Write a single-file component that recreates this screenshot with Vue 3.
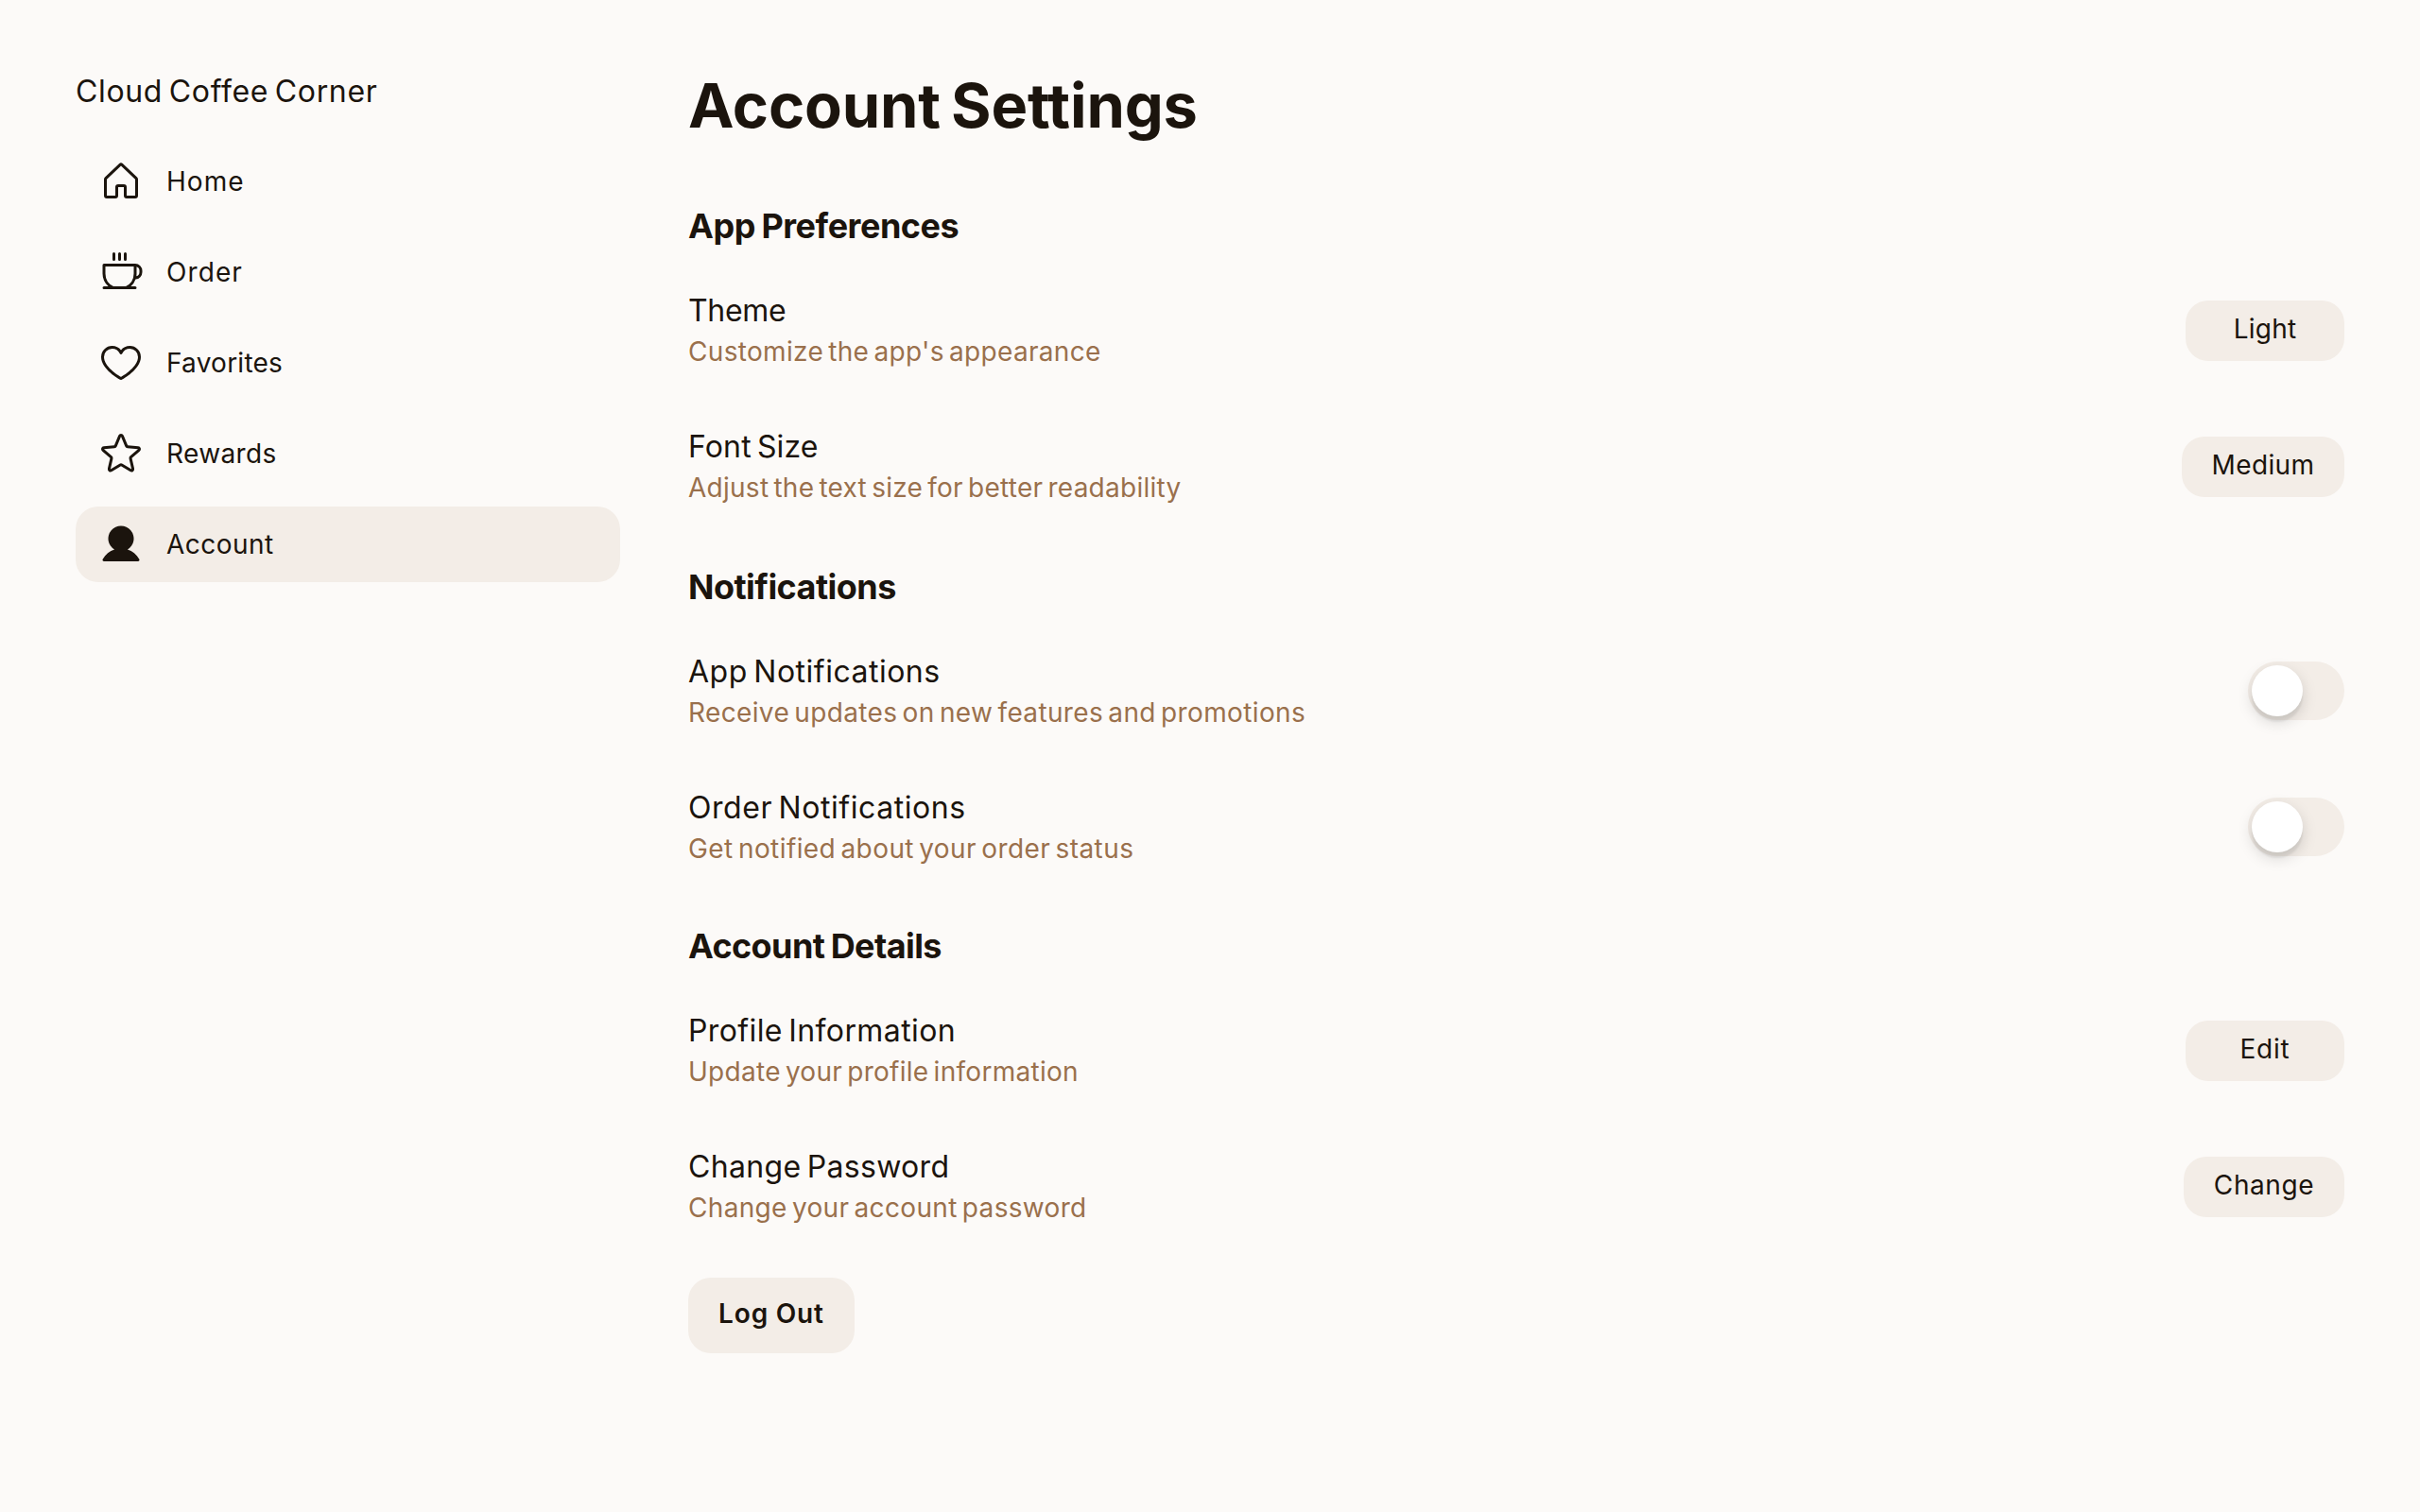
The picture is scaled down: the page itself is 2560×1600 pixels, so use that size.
<script setup>
const nav = [
  { label: 'Home', tracking: 1.05, icon: 'M218.83,103.77l-80-75.48a1.14,1.14,0,0,1-.11-.11,16,16,0,0,0-21.53,0l-.11.11L37.17,103.77A16,16,0,0,0,32,115.55V208a16,16,0,0,0,16,16H96a16,16,0,0,0,16-16V160h32v48a16,16,0,0,0,16,16h48a16,16,0,0,0,16-16V115.55A16,16,0,0,0,218.83,103.77ZM208,208H160V160a16,16,0,0,0-16-16H112a16,16,0,0,0-16,16v48H48V115.55l.11-.1L128,40l79.9,75.43.11.1Z' },
  { label: 'Order', tracking: 1.1, icon: 'M80,56V24a8,8,0,0,1,16,0V56a8,8,0,0,1-16,0Zm40,8a8,8,0,0,0,8-8V24a8,8,0,0,0-16,0V56A8,8,0,0,0,120,64Zm32,0a8,8,0,0,0,8-8V24a8,8,0,0,0-16,0V56A8,8,0,0,0,152,64Zm96,56v8a40,40,0,0,1-37.51,39.91,96.59,96.59,0,0,1-27,40.09H208a8,8,0,0,1,0,16H32a8,8,0,0,1,0-16H56.54A96.3,96.3,0,0,1,24,136V88a8,8,0,0,1,8-8H208A40,40,0,0,1,248,120ZM200,96H40v40a80.27,80.27,0,0,0,45.12,72h69.76A80.27,80.27,0,0,0,200,136Zm32,24a24,24,0,0,0-16-22.62V136a95.78,95.78,0,0,1-1.2,15A24,24,0,0,0,232,128Z' },
  { label: 'Favorites', tracking: 0.25, icon: 'M178,32c-20.65,0-38.73,8.88-50,23.89C116.73,40.88,98.65,32,78,32A62.07,62.07,0,0,0,16,94c0,70,103.79,126.66,108.21,129a8,8,0,0,0,7.58,0C136.21,220.66,240,164,240,94A62.07,62.07,0,0,0,178,32ZM128,206.8C109.74,196.16,32,147.69,32,94A46.06,46.06,0,0,1,78,48c19.45,0,35.78,10.36,42.6,27a8,8,0,0,0,14.8,0c6.82-16.67,23.15-27,42.6-27a46.06,46.06,0,0,1,46,46C224,147.61,146.24,196.15,128,206.8Z' },
  { label: 'Rewards', tracking: 0.36, icon: 'M239.2,97.29a16,16,0,0,0-13.81-11L166,81.17,142.72,25.81h0a15.95,15.95,0,0,0-29.44,0L90.07,81.17,30.61,86.32a16,16,0,0,0-9.11,28.06L66.61,153.8,53.09,212.34a16,16,0,0,0,23.84,17.34l51-31,51.11,31a16,16,0,0,0,23.84-17.34l-13.51-58.6,45.1-39.36A16,16,0,0,0,239.2,97.29Zm-15.22,5-45.1,39.36a16,16,0,0,0-5.08,15.71L187.35,216v0l-51.07-31a15.9,15.9,0,0,0-16.54,0l-51,31h0L82.2,157.4a16,16,0,0,0-5.08-15.71L32,102.35a.37.37,0,0,1,0-.09l59.44-5.14a16,16,0,0,0,13.35-9.75L128,32.08l23.2,55.29a16,16,0,0,0,13.35,9.75L224,102.26S224,102.32,224,102.33Z' },
  { label: 'Account', tracking: 0.46, active: true, icon: 'M230.93,220a8,8,0,0,1-6.93,4H32a8,8,0,0,1-6.92-12c15.23-26.33,38.7-45.21,66.09-54.16a72,72,0,1,1,73.66,0c27.39,8.95,50.86,27.83,66.09,54.16A8,8,0,0,1,230.93,220Z' }
]

const sections = [
  {
    title: 'App Preferences', tracking: -0.47,
    rows: [
      { title: 'Theme', tt: -0.32, text: "Customize the app's appearance", st: 0.32, action: 'Light', at: 0.24, width: 168 },
      { title: 'Font Size', tt: 0.14, text: 'Adjust the text size for better readability', st: 0.26, action: 'Medium', at: 0.38, width: 172 }
    ]
  },
  {
    title: 'Notifications', tracking: -0.54, lowered: true,
    rows: [
      { title: 'App Notifications', tt: 0.5, text: 'Receive updates on new features and promotions', st: 0.36 },
      { title: 'Order Notifications', tt: 0.55, text: 'Get notified about your order status', st: 0.42 }
    ]
  },
  {
    title: 'Account Details', tracking: -0.6,
    rows: [
      { title: 'Profile Information', tt: 0.39, text: 'Update your profile information', st: 0.28, action: 'Edit', at: 0.81, width: 168 },
      { title: 'Change Password', tt: 0.32, text: 'Change your account password', st: 0.33, action: 'Change', at: 0.59, width: 170 }
    ]
  }
]

const px = (v) => ({ letterSpacing: v + 'px' })
</script>

<template>
  <div class="page">
    <aside class="sidebar">
      <div class="brand">Cloud Coffee Corner</div>
      <nav class="nav">
        <a v-for="n in nav" :key="n.label" class="nav-item" :class="{ active: n.active }">
          <svg class="icon" viewBox="0 0 256 256" fill="currentColor"><path :d="n.icon" /></svg>
          <span :style="px(n.tracking)">{{ n.label }}</span>
        </a>
      </nav>
    </aside>
    <main class="content">
      <h1 class="title">Account Settings</h1>
      <section v-for="s in sections" :key="s.title" :class="{ lowered: s.lowered }">
        <h2 class="heading" :style="px(s.tracking)">{{ s.title }}</h2>
        <div v-for="r in s.rows" :key="r.title" class="row">
          <div class="copy">
            <div class="row-title" :style="px(r.tt)">{{ r.title }}</div>
            <div class="row-text" :style="px(r.st)">{{ r.text }}</div>
          </div>
          <button v-if="r.action" class="action" :style="{ width: r.width + 'px', letterSpacing: r.at + 'px' }">{{ r.action }}</button>
          <div v-else class="toggle"><div class="knob"></div></div>
        </div>
      </section>
      <button class="logout">Log Out</button>
    </main>
  </div>
</template>

<style>
body {
  background: #fcfaf8;
}
</style>

<style scoped>
.page {
  box-sizing: border-box;
  display: flex;
  gap: 72px;
  width: 2560px;
  height: 1600px;
  padding: 72px 80px 0;
  background: #fcfaf8;
  color: #1b140d;
  font-family: Inter, "Open Sans", sans-serif;
  word-spacing: -3px;
  overflow: hidden;
}
.sidebar {
  width: 576px;
  flex: none;
}
.brand {
  height: 80px;
  font-size: 32px;
  font-weight: 400;
  line-height: 49px;
  letter-spacing: 0.66px;
}
.nav {
  display: flex;
  flex-direction: column;
  gap: 16px;
}
.nav-item {
  display: flex;
  align-items: center;
  gap: 24px;
  height: 80px;
  padding: 0 24px;
  box-sizing: border-box;
  border-radius: 24px;
  font-size: 28px;
  font-weight: 400;
  line-height: 42px;
}
.nav-item.active {
  background: #f3ede7;
}
.icon {
  width: 48px;
  height: 48px;
  flex: none;
}
.content {
  flex: 1;
}
.title {
  margin: 0;
  height: 113px;
  font-size: 65px;
  font-weight: 700;
  line-height: 80px;
  letter-spacing: -0.18px;
  word-spacing: -4px;
}
.heading {
  box-sizing: border-box;
  height: 93px;
  margin: 0;
  padding-top: 32px;
  font-size: 36px;
  font-weight: 700;
  line-height: 44px;
  word-spacing: -1.5px;
}
.row {
  display: flex;
  align-items: center;
  justify-content: space-between;
  height: 144px;
}
.copy {
  padding-bottom: 5px;
}
.lowered .heading {
  padding-top: 33px;
}
.lowered .copy {
  padding-bottom: 3px;
}
.row-title {
  font-size: 32px;
  font-weight: 400;
  line-height: 48px;
}
.row-text {
  color: #9a704c;
  font-size: 28px;
  font-weight: 400;
  line-height: 38px;
}
.action,
.logout {
  display: block;
  padding: 0;
  border: 0;
  border-radius: 24px;
  background: #f3ede7;
  color: inherit;
  font-family: inherit;
  font-size: 28px;
  text-align: center;
}
.action {
  height: 64px;
  padding-bottom: 4px;
  font-weight: 400;
  line-height: 60px;
}
.logout {
  width: 176px;
  height: 80px;
  margin-top: 24px;
  padding-bottom: 4px;
  font-weight: 600;
  line-height: 76px;
  letter-spacing: 0.9px;
  word-spacing: -0.5px;
}
.toggle {
  box-sizing: border-box;
  width: 102px;
  height: 62px;
  padding: 4px;
  border-radius: 31px;
  background: #f3ede7;
}
.knob {
  width: 54px;
  height: 54px;
  border-radius: 50%;
  background: #fff;
  box-shadow: 0 6px 16px rgba(0, 0, 0, 0.15), 0 6px 2px rgba(0, 0, 0, 0.06);
}
</style>
